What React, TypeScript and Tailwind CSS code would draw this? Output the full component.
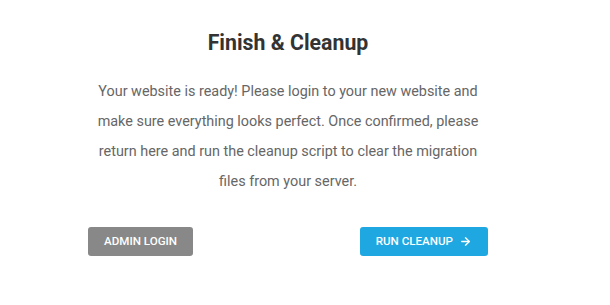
import { ArrowRight } from "lucide-react";

const App = () => {
  return (
    <div className="min-h-[305px] w-full bg-white font-['Roboto',sans-serif]">
      <div className="ml-[88px] flex w-[400px] flex-col items-center pt-[29px]">
        <h1 className="text-[21.3px] font-bold leading-[28px] text-[#333333]">Finish &amp; Cleanup</h1>
        <p className="mt-[20px] px-[8px] text-center text-[14.4px] leading-[30px] text-[#666666]">
          Your website is ready! Please login to your new website and make sure everything looks perfect. Once
          confirmed, please return here and run the cleanup script to clear the migration files from your server.
        </p>
        <div className="mt-[30px] flex w-full items-center justify-between">
          <button className="h-[29px] rounded-[3px] bg-[#888888] px-[16px] text-[11.6px] font-medium text-white">
            ADMIN LOGIN
          </button>
          <button className="flex h-[29px] items-center gap-[6px] rounded-[3px] bg-[#1ea7e1] px-[16px] text-[11.6px] font-medium text-white">
            RUN CLEANUP
            <ArrowRight size={13} strokeWidth={2.5} />
          </button>
        </div>
      </div>
    </div>
  );
};

export default App;
